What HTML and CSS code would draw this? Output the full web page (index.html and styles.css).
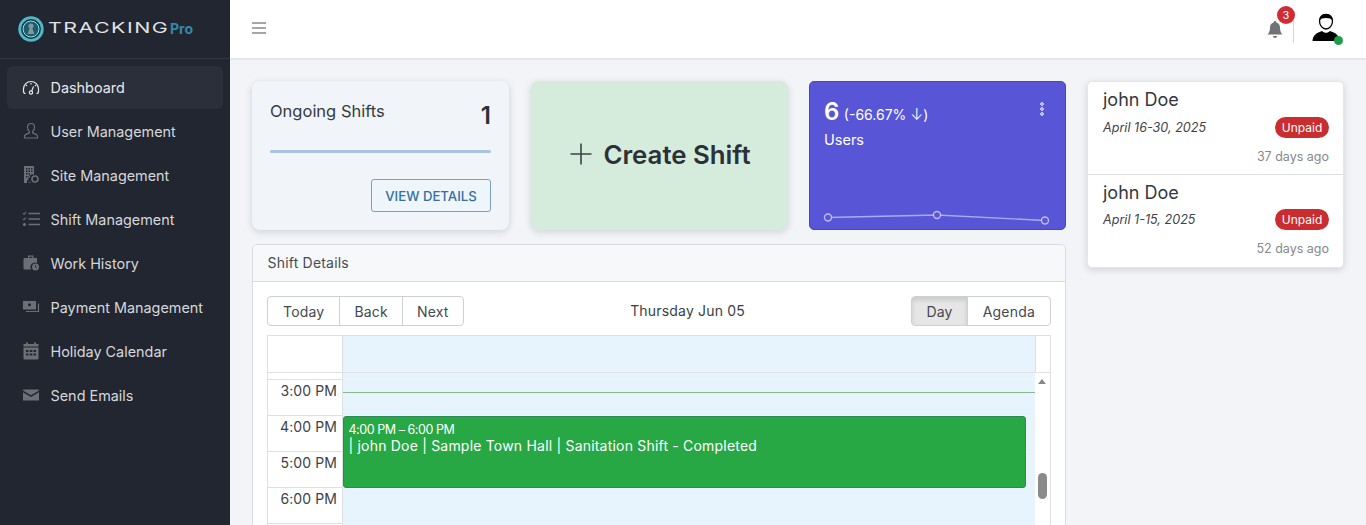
FILE: index.html
```html
<!DOCTYPE html>
<html lang="en">
<head>
<meta charset="utf-8">
<title>Tracking Pro</title>
<link rel="stylesheet" href="styles.css">
</head>
<body>
<div class="app">
  <aside class="sidebar">
    <div class="brand">
      <svg class="brand-mark" width="26" height="26" viewBox="0 0 26 26"><circle cx="13" cy="13" r="11.300" fill="#14323f" stroke="#4fb9c8" stroke-width="2.800"/><circle cx="13" cy="13" r="8" fill="#1d5c6c" stroke="#9be3e6" stroke-width="1"/><path d="M13 7.500a2.600 2.600 0 0 1 2.600 2.600c0 1-.5 1.800-1.200 2.300l2.100 5.600H9.500l2.100-5.600a2.800 2.800 0 0 1-1.200-2.300A2.600 2.600 0 0 1 13 7.500z" fill="#7d97a3"/></svg>
      <span class="brand-name">TRACKING</span><span class="brand-pro">Pro</span>
    </div>
    <nav class="nav">
      <a class="nav-item active"><svg class="ico" viewBox="0 0 18 18" fill="none" stroke="currentColor" stroke-width="1.200"><path d="M3.500 14.500H2.300A7.500 7 0 0 1 1.500 10a7.500 7.500 0 0 1 15 0 7.500 7 0 0 1-.8 4.500h-1.200M9 4v1.500M4 6l1 1M14 6l-1 1M11.500 7.500 9.700 12"/><circle cx="9" cy="13.500" r="1.600"/></svg>Dashboard</a>
      <a class="nav-item"><svg class="ico" viewBox="0 0 18 18" fill="none" stroke="#6b7077" stroke-width="1.200"><path d="M9 1.500c2.300 0 3.500 1.700 3.500 3.700 0 2-1 3.600-1.900 4.400v1.300l3.800 1.700c.8.400 1.100 1 1.100 1.800v1.600H2.500v-1.600c0-.8.300-1.400 1.100-1.800l3.800-1.700V9.600C6.500 8.800 5.500 7.200 5.500 5.200c0-2 1.200-3.700 3.500-3.700z"/></svg>User Management</a>
      <a class="nav-item"><svg class="ico" viewBox="0 0 18 18"><path fill="#6b7077" fill-rule="evenodd" d="M2 0h10v8.600a4 4 0 0 0-2.800 8.400H7v-3H5v3H2zM4 2v1.500h1.500V2zm2.500 0v1.500H8V2zM9 2v1.500h1.500V2zM4 4.500V6h1.500V4.500zm2.500 0V6H8V4.500zm2.500 0V6h1.500V4.500zM4 7v1.500h1.500V7zm2.500 0v1.500H8V7zM4 10v1.500h1.500V10zm2.500 0v1.500H8V10z"/><circle cx="13" cy="13" r="3" fill="none" stroke="#6b7077" stroke-width="1.600"/></svg>Site Management</a>
      <a class="nav-item"><svg class="ico" viewBox="0 0 18 18" fill="none" stroke="#6b7077" stroke-width="1.600"><path d="M6.500 3.500H18M6.500 9H18M6.500 14.500H18"/><path stroke-width="1.100" d="M1 3.300l1 1 2-2.200M1 8.800l1 1 2-2.200"/><circle cx="2.500" cy="14.500" r=".8" fill="#6b7077"/></svg>Shift Management</a>
      <a class="nav-item"><svg class="ico" viewBox="0 0 18 18"><path fill="#6b7077" d="M6 1.500h5.500V4H15v5a4.500 4.500 0 0 0-5.800 6.500H2.500a1 1 0 0 1-1-1V5a1 1 0 0 1 1-1H6zm1.200 1.200V4h3.100V2.700z"/><circle cx="13.500" cy="13" r="3.500" fill="#6b7077"/><path d="M13.500 11v2.200l1.300.8" stroke="#212631" stroke-width=".8" fill="none"/></svg>Work History</a>
      <a class="nav-item"><svg class="ico" viewBox="0 0 18 18"><path fill="#6b7077" fill-rule="evenodd" d="M1 3h13v8.500H1zm6.500 2.300a1.500 1.500 0 1 0 0 3 1.500 1.500 0 0 0 0-3z"/><path fill="none" stroke="#6b7077" stroke-width="1.200" d="M16.500 5.500v8H4"/></svg>Payment Management</a>
      <a class="nav-item"><svg class="ico" viewBox="0 0 18 18"><path fill="#6b7077" fill-rule="evenodd" d="M4 .5h2V2h6V.5h2V2h2.500v14.500a1 1 0 0 1-1 1h-13a1 1 0 0 1-1-1V2H4zM1.500 4.500v1h15v-1zM4 8v2h2.500V8zm3.800 0v2h2.500V8zm3.700 0v2H14V8zM4 11.500v2h2.500v-2zm3.800 0v2h2.500v-2zm3.700 0v2H14v-2z"/></svg>Holiday Calendar</a>
      <a class="nav-item"><svg class="ico" viewBox="0 0 18 18"><path fill="#6b7077" d="M1.500 3.500h15a.5.5 0 0 1 .5.500v.4L9 9.300 1 4.400V4a.5.500 0 0 1 .5-.5zM1 6.200l8 4.900 8-4.900V14a.5.5 0 0 1-.5.500h-15A.5.500 0 0 1 1 14z"/></svg>Send Emails</a>
    </nav>
  </aside>
  <div class="main">
    <header class="topbar">
      <svg class="burger" width="14" height="12" viewBox="0 0 14 12"><path d="M0 1h14M0 6h14M0 11h14" stroke="#878a8d" stroke-width="1.300"/></svg>
      <div class="top-right">
        <div class="bell">
          <svg width="16" height="18" viewBox="0 0 16 18"><path fill="#6f7276" d="M8 0a1.300 1.300 0 0 1 1.300 1.400C11.800 2 13 4 13 6.500c0 3.500.9 5.200 2.500 7H.5C2.100 11.700 3 10 3 6.500 3 4 4.200 2 6.700 1.400A1.300 1.300 0 0 1 8 0z"/><path fill="#6f7276" d="M6 15h4a2 2 0 0 1-4 0z"/></svg>
          <span class="bell-badge">3</span>
        </div>
        <div class="avatar">
          <svg width="30" height="30" viewBox="0 0 30 30"><path d="M15 1.500c4 0 6.500 2.700 6.500 6.500 0 4.500-3 8-6.500 8s-6.500-3.500-6.500-8c0-3.800 2.500-6.500 6.500-6.500z" fill="#fff" stroke="#000" stroke-width="1.300"/><path d="M8.600 8C8.400 3.800 11 1 15 1s6.600 2.800 6.400 7c-1-2.400-3-3-6.400-3s-5.400.6-6.400 3z" fill="#000"/><path d="M1.500 28c0-5.500 4.500-8.500 9.500-10 1.300 1.200 2.500 1.800 4 1.800s2.700-.6 4-1.800c5 1.500 9.500 4.500 9.500 10z" fill="#000"/></svg>
          <span class="avatar-dot"></span>
        </div>
      </div>
    </header>
    <div class="content">
      <div class="left-col">
        <div class="stat-row">
          <section class="card-ongoing">
            <div class="ongoing-head"><span class="ongoing-title">Ongoing Shifts</span><span class="ongoing-num">1</span></div>
            <div class="ongoing-rule"></div>
            <div class="ongoing-foot"><a class="btn-view">VIEW DETAILS</a></div>
          </section>
          <section class="card-create">
            <svg width="24" height="24" viewBox="0 0 24 24"><path d="M12 1.500v21M1.500 12h21" stroke="#3d4349" stroke-width="1.600"/></svg>
            <span>Create Shift</span>
          </section>
          <section class="card-users">
            <div class="users-top">
              <div><span class="users-num">6</span> <span class="users-delta">(-66.67% <span class="users-arrow">↓</span>)</span></div>
              <svg class="kebab" width="6" height="14" viewBox="0 0 6 14"><g fill="none" stroke="#fff" stroke-width="1"><circle cx="3" cy="2" r="1.300"/><circle cx="3" cy="7" r="1.300"/><circle cx="3" cy="12" r="1.300"/></g></svg>
            </div>
            <div class="users-label">Users</div>
            <svg class="spark" width="257" height="30" viewBox="0 0 257 30"><path d="M19 17.500 128 15 236 20.500" fill="none" stroke="rgba(255,255,255,.5)" stroke-width="1.400"/><g fill="#5856d6" stroke="rgba(255,255,255,.6)" stroke-width="1.400"><circle cx="19" cy="17.500" r="3.500"/><circle cx="128" cy="15" r="3.500"/><circle cx="236" cy="20.500" r="3.500"/></g></svg>
          </section>
        </div>
        <section class="shift-card">
          <div class="shift-head">Shift Details</div>
          <div class="shift-body">
            <div class="toolbar">
              <div class="btn-group"><span class="cal-btn">Today</span><span class="cal-btn tight">Back</span><span class="cal-btn tight">Next</span></div>
              <div class="cal-date">Thursday Jun 05</div>
              <div class="btn-group"><span class="cal-btn on">Day</span><span class="cal-btn">Agenda</span></div>
            </div>
            <div class="cal">
              <div class="cal-header"><div class="gutter-head"></div><div class="day-head"></div><div class="scroll-head"></div></div>
              <div class="cal-body">
                <div class="gutter">
                  <div class="slot stub"></div>
                  <div class="slot">3:00 PM</div>
                  <div class="slot">4:00 PM</div>
                  <div class="slot">5:00 PM</div>
                  <div class="slot">6:00 PM</div>
                </div>
                <div class="day">
                  <div class="cell stub"></div><div class="cell"></div><div class="cell"></div><div class="cell"></div><div class="cell"></div>
                  <div class="now-line"></div>
                  <div class="event">
                    <div class="event-time">4:00 PM – 6:00 PM</div>
                    <div class="event-title">| john Doe | Sample Town Hall | Sanitation Shift - Completed</div>
                  </div>
                </div>
                <div class="scrollbar"><span class="arrow"></span><span class="thumb"></span></div>
              </div>
            </div>
          </div>
        </section>
      </div>
      <aside class="pay-card">
        <div class="pay-item">
          <div class="pay-name">john Doe</div>
          <div class="pay-row"><em>April 16-30, 2025</em><span class="badge">Unpaid</span></div>
          <div class="pay-ago">37 days ago</div>
        </div>
        <div class="pay-item">
          <div class="pay-name">john Doe</div>
          <div class="pay-row"><em>April 1-15, 2025</em><span class="badge">Unpaid</span></div>
          <div class="pay-ago">52 days ago</div>
        </div>
      </aside>
    </div>
  </div>
</div>
</body>
</html>
```
FILE: styles.css
```css
* { box-sizing: border-box; }
html, body { margin: 0; height: 100%; overflow: hidden; }
body { font-family: Inter, "Liberation Sans", sans-serif; color: #2c3138; background: #f3f4f7; }
.app { display: flex; height: 525px; overflow: hidden; }

.sidebar { width: 230px; flex: none; background: #212631; }
.brand { height: 59px; display: flex; align-items: center; padding-left: 18px; border-bottom: 1px solid #323741; }
.brand-mark { flex: none; margin-right: 4px; }
.brand-name { display: inline-block; width: 119px; margin-bottom: 3px; font-size: 15px; letter-spacing: 1px; color: #dfe3e6; white-space: nowrap; transform: scaleX(1.43); transform-origin: left center; }
.brand-pro { font-size: 14px; font-weight: 700; color: #3489a8; margin: 0 0 2px 3px; }
.nav { padding: 7px 7px 0; display: flex; flex-direction: column; }
.nav-item { height: 44px; display: flex; align-items: center; padding-left: 15px; gap: 10.500px; font-size: 14.400px; color: #d5d7da; border-radius: 6px; }
.nav-item.active { background: #2a2f3a; color: #e6e8ea; height: 43px; }
.ico { width: 18px; height: 18px; flex: none; }

.main { flex: 1; min-width: 0; }
.topbar { height: 60px; background: #fff; border-bottom: 2px solid #e3e6ea; display: flex; align-items: center; justify-content: space-between; padding: 0 25px 3px 22px; }
.top-right { display: flex; align-items: center; gap: 17px; }
.bell { position: relative; width: 28px; height: 28px; border-right: 1px solid #d4d6d9; display: flex; align-items: center; margin-top: 2px; padding: 2px 0 0 1px; }
.bell-badge { position: absolute; top: -9px; left: 11px; width: 18px; height: 18px; border-radius: 50%; background: #cf2c33; color: #fff; font-size: 11px; line-height: 18px; text-align: center; }
.avatar { position: relative; width: 30px; height: 30px; }
.avatar svg { display: block; }
.avatar-dot { position: absolute; right: -2px; bottom: -2px; width: 9px; height: 9px; border-radius: 50%; background: #1f9d4d; }

.content { display: flex; gap: 21px; padding: 21px 22px 0; align-items: flex-start; }
.left-col { width: 814px; flex: none; }
.stat-row { display: grid; grid-template-columns: 257px 257px 257px; justify-content: space-between; }

.card-ongoing { height: 149px; background: #f1f4f9; border-radius: 8px; box-shadow: 0 2px 7px rgba(30,40,60,.16); padding: 20px 18px 18px; display: flex; flex-direction: column; }
.ongoing-head { display: flex; justify-content: space-between; height: 49px; }
.ongoing-title { font-size: 16.500px; line-height: 20px; color: #363b42; }
.ongoing-num { font-size: 24px; font-weight: 600; line-height: 30px; }
.ongoing-rule { height: 3px; background: #a9c4e0; border-radius: 2px; }
.ongoing-foot { display: flex; justify-content: flex-end; margin-top: 26px; }
.btn-view { width: 120px; height: 33px; border: 1px solid #7ba0c0; border-radius: 3px; background: #eef5fb; color: #34709f; font-size: 13.200px; font-weight: 500; display: flex; align-items: center; justify-content: center; }

.card-create { height: 149px; padding: 0 0 3px 2px; background: #d5ecdc; border-radius: 8px; box-shadow: 0 2px 7px rgba(30,40,60,.16); display: flex; align-items: center; justify-content: center; gap: 10px; font-size: 25.800px; font-weight: 600; color: #2c3138; }

.card-users { position: relative; height: 149px; background: #5856d6; border: 1px solid #4a48b8; border-radius: 5px; padding: 15px 14px 0 14px; color: #fff; }
.users-top { display: flex; justify-content: space-between; align-items: flex-start; }
.users-num { font-size: 24px; font-weight: 600; line-height: 30px; }
.users-delta { font-size: 14px; }
.users-arrow { font-weight: 300; font-size: 15.500px; }
.kebab { margin: 5px 6px 0 0; }
.users-label { font-size: 14.500px; margin-top: 4px; }
.spark { position: absolute; left: -1px; bottom: -1px; }

.shift-card { margin-top: 14px; background: #fff; border: 1px solid #d8dbe0; border-radius: 5px 5px 0 0; }
.shift-head { height: 37px; background: #f7f8f9; border-bottom: 1px solid #d8dbe0; padding-left: 14.500px; font-size: 14px; line-height: 36px; letter-spacing: .2px; color: #474c53; border-radius: 5px 5px 0 0; }
.shift-body { padding: 14px; }
.toolbar { display: flex; justify-content: space-between; align-items: center; height: 39px; padding-bottom: 9px; }
.btn-group { display: flex; border: 1px solid #cdd0d4; border-radius: 4px; height: 30px; overflow: hidden; }
.cal-btn { padding: 0 15px; font-size: 14px; line-height: 30px; letter-spacing: .2px; color: #44494f; border-left: 1px solid #cdd0d4; }
.cal-btn:first-child { border-left: 0; }
.cal-btn.tight { padding: 0 14px; }
.cal-btn.on { padding: 0 14px; background: #e6e6e6; box-shadow: inset 0 3px 5px rgba(0,0,0,.13); }
.cal-date { font-size: 14px; letter-spacing: .18px; color: #3a3f45; margin-top: -1px; }

.cal { border: 1px solid #dde0e4; border-bottom: 0; width: 784px; }
.cal-header { display: flex; height: 37px; border-bottom: 1px solid #dde0e4; }
.gutter-head { width: 75px; border-right: 1px solid #dde0e4; }
.day-head { width: 692px; background: #e8f4fd; }
.scroll-head { flex: 1; border-left: 1px solid #dde0e4; }
.cal-body { display: flex; height: 300px; }
.gutter { width: 75px; border-right: 1px solid #dde0e4; flex: none; }
.slot { height: 36px; border-bottom: 1px solid #dde0e4; font-size: 14px; line-height: 22px; text-align: right; padding-right: 5px; letter-spacing: .1px; color: #3d4248; }
.slot.stub { height: 7px; }
.day { position: relative; width: 692px; flex: none; background: #e8f4fd; }
.cell { height: 36px; border-bottom: 1px solid #eff5fb; }
.cell.stub { height: 7px; }
.now-line { position: absolute; left: 0; right: 0; top: 19px; height: 1px; background: #86b98a; }
.event { position: absolute; left: 0; width: 683px; top: 43px; height: 72px; background: #28a745; border: 1px solid #2d8a58; border-radius: 3px; padding: 6px 4.500px; color: #fff; }
.event-time { font-size: 12.500px; line-height: 14px; letter-spacing: -.45px; }
.event-title { font-size: 14px; line-height: 18px; letter-spacing: .2px; }
.scrollbar { position: relative; flex: 1; }
.arrow { position: absolute; left: 3px; top: 6px; border: 4.500px solid transparent; border-top: 0; border-bottom: 5.500px solid #888; }
.thumb { position: absolute; left: 3px; top: 100px; width: 9px; height: 26px; border-radius: 5px; background: #8a8a8a; }

.pay-card { width: 257px; flex: none; background: #fff; border-radius: 5px; border: 1px solid #e4e6ea; box-shadow: 0 2px 7px rgba(30,40,60,.16); }
.pay-item { height: 93px; padding: 4px 14px 0 15px; border-bottom: 1px solid #dde0e5; }
.pay-item:last-child { border-bottom: 0; height: 92px; }
.pay-name { font-size: 18px; line-height: 27px; color: #34383f; }
.pay-row { display: flex; justify-content: space-between; align-items: center; margin-top: 4px; font-size: 12.600px; color: #3f4349; }
.pay-item + .pay-item .pay-row { margin-top: 3px; }
.badge { width: 54px; height: 21px; border-radius: 11px; background: #ca2d30; color: #fff; font-size: 12px; line-height: 21px; text-align: center; }
.pay-ago { text-align: right; font-size: 12.500px; margin-top: 11px; color: #85888c; }
```
